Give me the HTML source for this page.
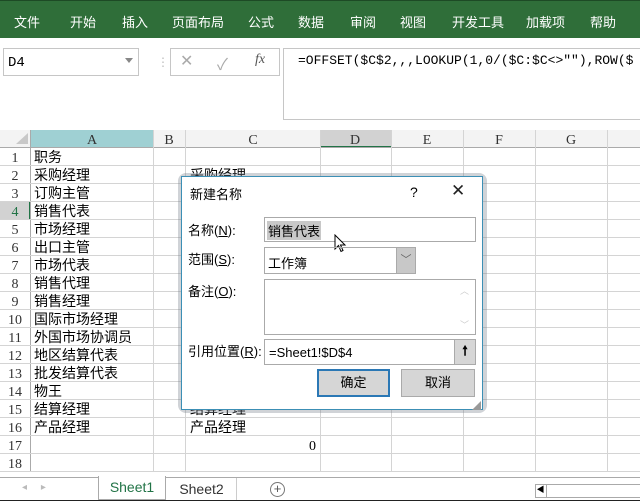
<!DOCTYPE html>
<html><head><meta charset="utf-8"><style>
*{margin:0;padding:0;box-sizing:border-box}
body{width:640px;height:501px;overflow:hidden;background:#fff;font-family:"Liberation Sans","Noto Sans CJK SC",sans-serif;position:relative}
.a{position:absolute}
.rib{left:0;top:0;width:640px;height:38px;background:#2f6e39;border-top:1px solid #1d4a25}
.rib span{position:absolute;top:11px;color:#fff;font-size:13px}
.mono{font-family:"Liberation Mono","Noto Sans CJK SC",monospace}
</style></head><body>
<div class="a rib">
<span style="left:14px">文件</span><span style="left:70px">开始</span><span style="left:122px">插入</span><span style="left:172px">页面布局</span><span style="left:248px">公式</span><span style="left:298px">数据</span><span style="left:350px">审阅</span><span style="left:400px">视图</span><span style="left:452px">开发工具</span><span style="left:526px">加载项</span><span style="left:590px">帮助</span>
</div>
<div class="a" style="left:3px;top:48px;width:136px;height:28px;border:1px solid #c6c6c6"></div>
<div class="a mono" style="left:8px;top:55px;font-size:14px">D4</div>
<div class="a" style="left:125px;top:58px;width:0;height:0;border-left:4px solid transparent;border-right:4px solid transparent;border-top:5px solid #888"></div>
<div class="a" style="left:157px;top:55px;color:#bbb;font-size:12px">⋮</div>
<div class="a" style="left:170px;top:48px;width:110px;height:28px;border:1px solid #c6c6c6"></div>
<div class="a" style="left:180px;top:51px;color:#aaa;font-size:16px">✕</div>
<div class="a" style="left:217px;top:51px;color:#aaa;font-size:16px">✓</div>
<div class="a" style="left:255px;top:52px;color:#555;font-size:14px;font-style:italic;font-family:'Liberation Serif',serif">fx</div>
<div class="a" style="left:283px;top:48px;width:360px;height:72px;border:1px solid #c6c6c6"></div>
<div class="a mono" style="left:298px;top:53px;font-size:13px;white-space:nowrap">=OFFSET($C$2,,,LOOKUP(1,0/($C:$C&lt;&gt;""),ROW($</div>
<svg class="a" style="left:0;top:130px" width="640" height="347">
<rect x="0" y="0" width="640" height="18" fill="#f3f3f3"/>
<rect x="31" y="0" width="122" height="18" fill="#9fd0d3"/>
<rect x="320" y="0" width="71" height="18" fill="#d2d2d2"/>
<rect x="320" y="16" width="71" height="2" fill="#217346"/>
<rect x="0" y="72" width="31" height="18" fill="#d2d2d2"/>
<rect x="29" y="72" width="2" height="18" fill="#217346"/>
<polygon points="16,14 28,14 28,3" fill="#c8c8c8"/>
<g stroke="#d4d4d4" stroke-width="1">
<line x1="0" x2="640" y1="17.5" y2="17.5" stroke="#aaa"/>
<line x1="30.5" x2="30.5" y1="0" y2="342" stroke="#aaa"/>
<line x1="153.5" x2="153.5" y1="0" y2="342"/><line x1="185.5" x2="185.5" y1="0" y2="342"/><line x1="320.5" x2="320.5" y1="0" y2="342"/><line x1="391.5" x2="391.5" y1="0" y2="342"/><line x1="463.5" x2="463.5" y1="0" y2="342"/><line x1="535.5" x2="535.5" y1="0" y2="342"/><line x1="607.5" x2="607.5" y1="0" y2="342"/>
<line x1="0" x2="640" y1="35.5" y2="35.5"/><line x1="0" x2="640" y1="53.5" y2="53.5"/><line x1="0" x2="640" y1="71.5" y2="71.5"/><line x1="0" x2="640" y1="89.5" y2="89.5"/><line x1="0" x2="640" y1="107.5" y2="107.5"/><line x1="0" x2="640" y1="125.5" y2="125.5"/><line x1="0" x2="640" y1="143.5" y2="143.5"/><line x1="0" x2="640" y1="161.5" y2="161.5"/><line x1="0" x2="640" y1="179.5" y2="179.5"/><line x1="0" x2="640" y1="197.5" y2="197.5"/><line x1="0" x2="640" y1="215.5" y2="215.5"/><line x1="0" x2="640" y1="233.5" y2="233.5"/><line x1="0" x2="640" y1="251.5" y2="251.5"/><line x1="0" x2="640" y1="269.5" y2="269.5"/><line x1="0" x2="640" y1="287.5" y2="287.5"/><line x1="0" x2="640" y1="305.5" y2="305.5"/><line x1="0" x2="640" y1="323.5" y2="323.5"/><line x1="0" x2="640" y1="341.5" y2="341.5"/>
</g>
<g font-family="Liberation Serif, serif" font-size="14" fill="#333" text-anchor="middle">
<text x="92" y="14">A</text><text x="169" y="14">B</text><text x="253" y="14">C</text><text x="355" y="14">D</text><text x="427" y="14">E</text><text x="499" y="14">F</text><text x="571" y="14">G</text>
<text x="15" y="32">1</text><text x="15" y="50">2</text><text x="15" y="68">3</text><text x="15" y="86" fill="#217346">4</text><text x="15" y="104">5</text><text x="15" y="122">6</text><text x="15" y="140">7</text><text x="15" y="158">8</text><text x="15" y="176">9</text><text x="15" y="194">10</text><text x="15" y="212">11</text><text x="15" y="230">12</text><text x="15" y="248">13</text><text x="15" y="266">14</text><text x="15" y="284">15</text><text x="15" y="302">16</text><text x="15" y="320">17</text><text x="15" y="338">18</text>
</g>
<g font-family="Liberation Sans, Noto Sans CJK SC, sans-serif" font-size="14" fill="#000">
<text x="34" y="32">职务</text><text x="34" y="50">采购经理</text><text x="34" y="68">订购主管</text><text x="34" y="86">销售代表</text><text x="34" y="104">市场经理</text><text x="34" y="122">出口主管</text><text x="34" y="140">市场代表</text><text x="34" y="158">销售代理</text><text x="34" y="176">销售经理</text><text x="34" y="194">国际市场经理</text><text x="34" y="212">外国市场协调员</text><text x="34" y="230">地区结算代表</text><text x="34" y="248">批发结算代表</text><text x="34" y="266">物王</text><text x="34" y="284">结算经理</text><text x="34" y="302">产品经理</text>
<text x="190" y="50">采购经理</text><text x="190" y="284">结算经理</text><text x="190" y="302">产品经理</text><text x="316" y="320" text-anchor="end" font-family="Liberation Serif, serif">0</text>
</g>
</svg>
<div class="a" style="left:0;top:477px;width:640px;height:24px;background:#fff;border-top:1px solid #aaa;border-bottom:1px solid #222"></div>
<div class="a" style="left:22px;top:482px;color:#bbb;font-size:10px">◂ &nbsp;&nbsp;&nbsp; ▸</div>
<div class="a" style="left:98px;top:476px;width:68px;height:24px;background:#fff;border:1px solid #aaa;border-top:none;color:#217346;font-size:14px;text-align:center;line-height:22px">Sheet1</div>
<div class="a" style="left:167px;top:481px;width:69px;color:#333;font-size:14px;text-align:center">Sheet2</div>
<div class="a" style="left:236px;top:478px;width:1px;height:22px;background:#ccc"></div>
<div class="a" style="left:270px;top:482px;width:15px;height:15px;border:1px solid #777;border-radius:50%;font-size:13px;line-height:12px;text-align:center;color:#555">+</div>
<div class="a" style="left:535px;top:484px;width:110px;height:14px;border:1px solid #aaa"></div>
<div class="a" style="left:535px;top:484px;width:12px;height:14px;border-right:1px solid #aaa;font-size:8px;line-height:12px;text-align:center">◀</div>
<div class="a" style="left:178px;top:173px;width:309px;height:240px;border-radius:8px;background:rgba(120,130,140,0.35)"></div>
<div class="a" style="left:181px;top:176px;width:302px;height:234px;background:#fff;border:1px solid #3c8fb5"></div>
<div class="a" style="left:190px;top:184px;font-size:13px">新建名称</div>
<div class="a" style="left:410px;top:184px;font-size:14px">?</div>
<div class="a" style="left:451px;top:181px;font-size:17px;color:#222">✕</div>
<div class="a" style="left:188px;top:220px;font-size:13px">名称(<u>N</u>):</div>
<div class="a" style="left:264px;top:217px;width:212px;height:25px;border:1px solid #aaa"></div>
<div class="a" style="left:267px;top:221px;font-size:13px;background:#c8c8c8;padding:0 1px">销售代表</div>
<svg class="a" style="left:334px;top:234px" width="14" height="20"><path d="M1 1 L1 15 L4.5 11.5 L7 17.5 L9 16.5 L6.5 11 L11 11 Z" fill="#fff" stroke="#000" stroke-width="1"/></svg>
<div class="a" style="left:188px;top:249px;font-size:13px">范围(<u>S</u>):</div>
<div class="a" style="left:264px;top:247px;width:152px;height:27px;border:1px solid #aaa"></div>
<div class="a" style="left:396px;top:248px;width:19px;height:25px;background:#c8c8c8;border-left:1px solid #aaa;color:#666;font-size:11px;text-align:center;line-height:25px">﹀</div>
<div class="a" style="left:268px;top:253px;font-size:13px">工作簿</div>
<div class="a" style="left:188px;top:281px;font-size:13px">备注(<u>O</u>):</div>
<div class="a" style="left:264px;top:279px;width:212px;height:56px;border:1px solid #aaa"></div>
<div class="a" style="left:460px;top:284px;color:#ccc;font-size:9px">︿</div>
<div class="a" style="left:460px;top:318px;color:#ccc;font-size:9px">﹀</div>
<div class="a" style="left:188px;top:341px;font-size:13px">引用位置(<u>R</u>):</div>
<div class="a" style="left:264px;top:339px;width:212px;height:26px;border:1px solid #aaa"></div>
<div class="a" style="left:454px;top:340px;width:21px;height:24px;background:#d6d6d6;border-left:1px solid #aaa;text-align:center;font-size:13px;font-weight:bold;line-height:22px">🠕</div>
<div class="a" style="left:269px;top:345px;font-size:13px">=Sheet1!$D$4</div>
<div class="a" style="left:317px;top:369px;width:73px;height:28px;background:#d6d6d6;border:2px solid #2b78b5;text-align:center;line-height:24px;font-size:13px">确定</div>
<div class="a" style="left:401px;top:369px;width:74px;height:28px;background:#d6d6d6;border:1px solid #aaa;text-align:center;line-height:26px;font-size:13px">取消</div>
<div class="a" style="left:472px;top:399px;color:#999;font-size:9px">◢</div>
</body></html>
